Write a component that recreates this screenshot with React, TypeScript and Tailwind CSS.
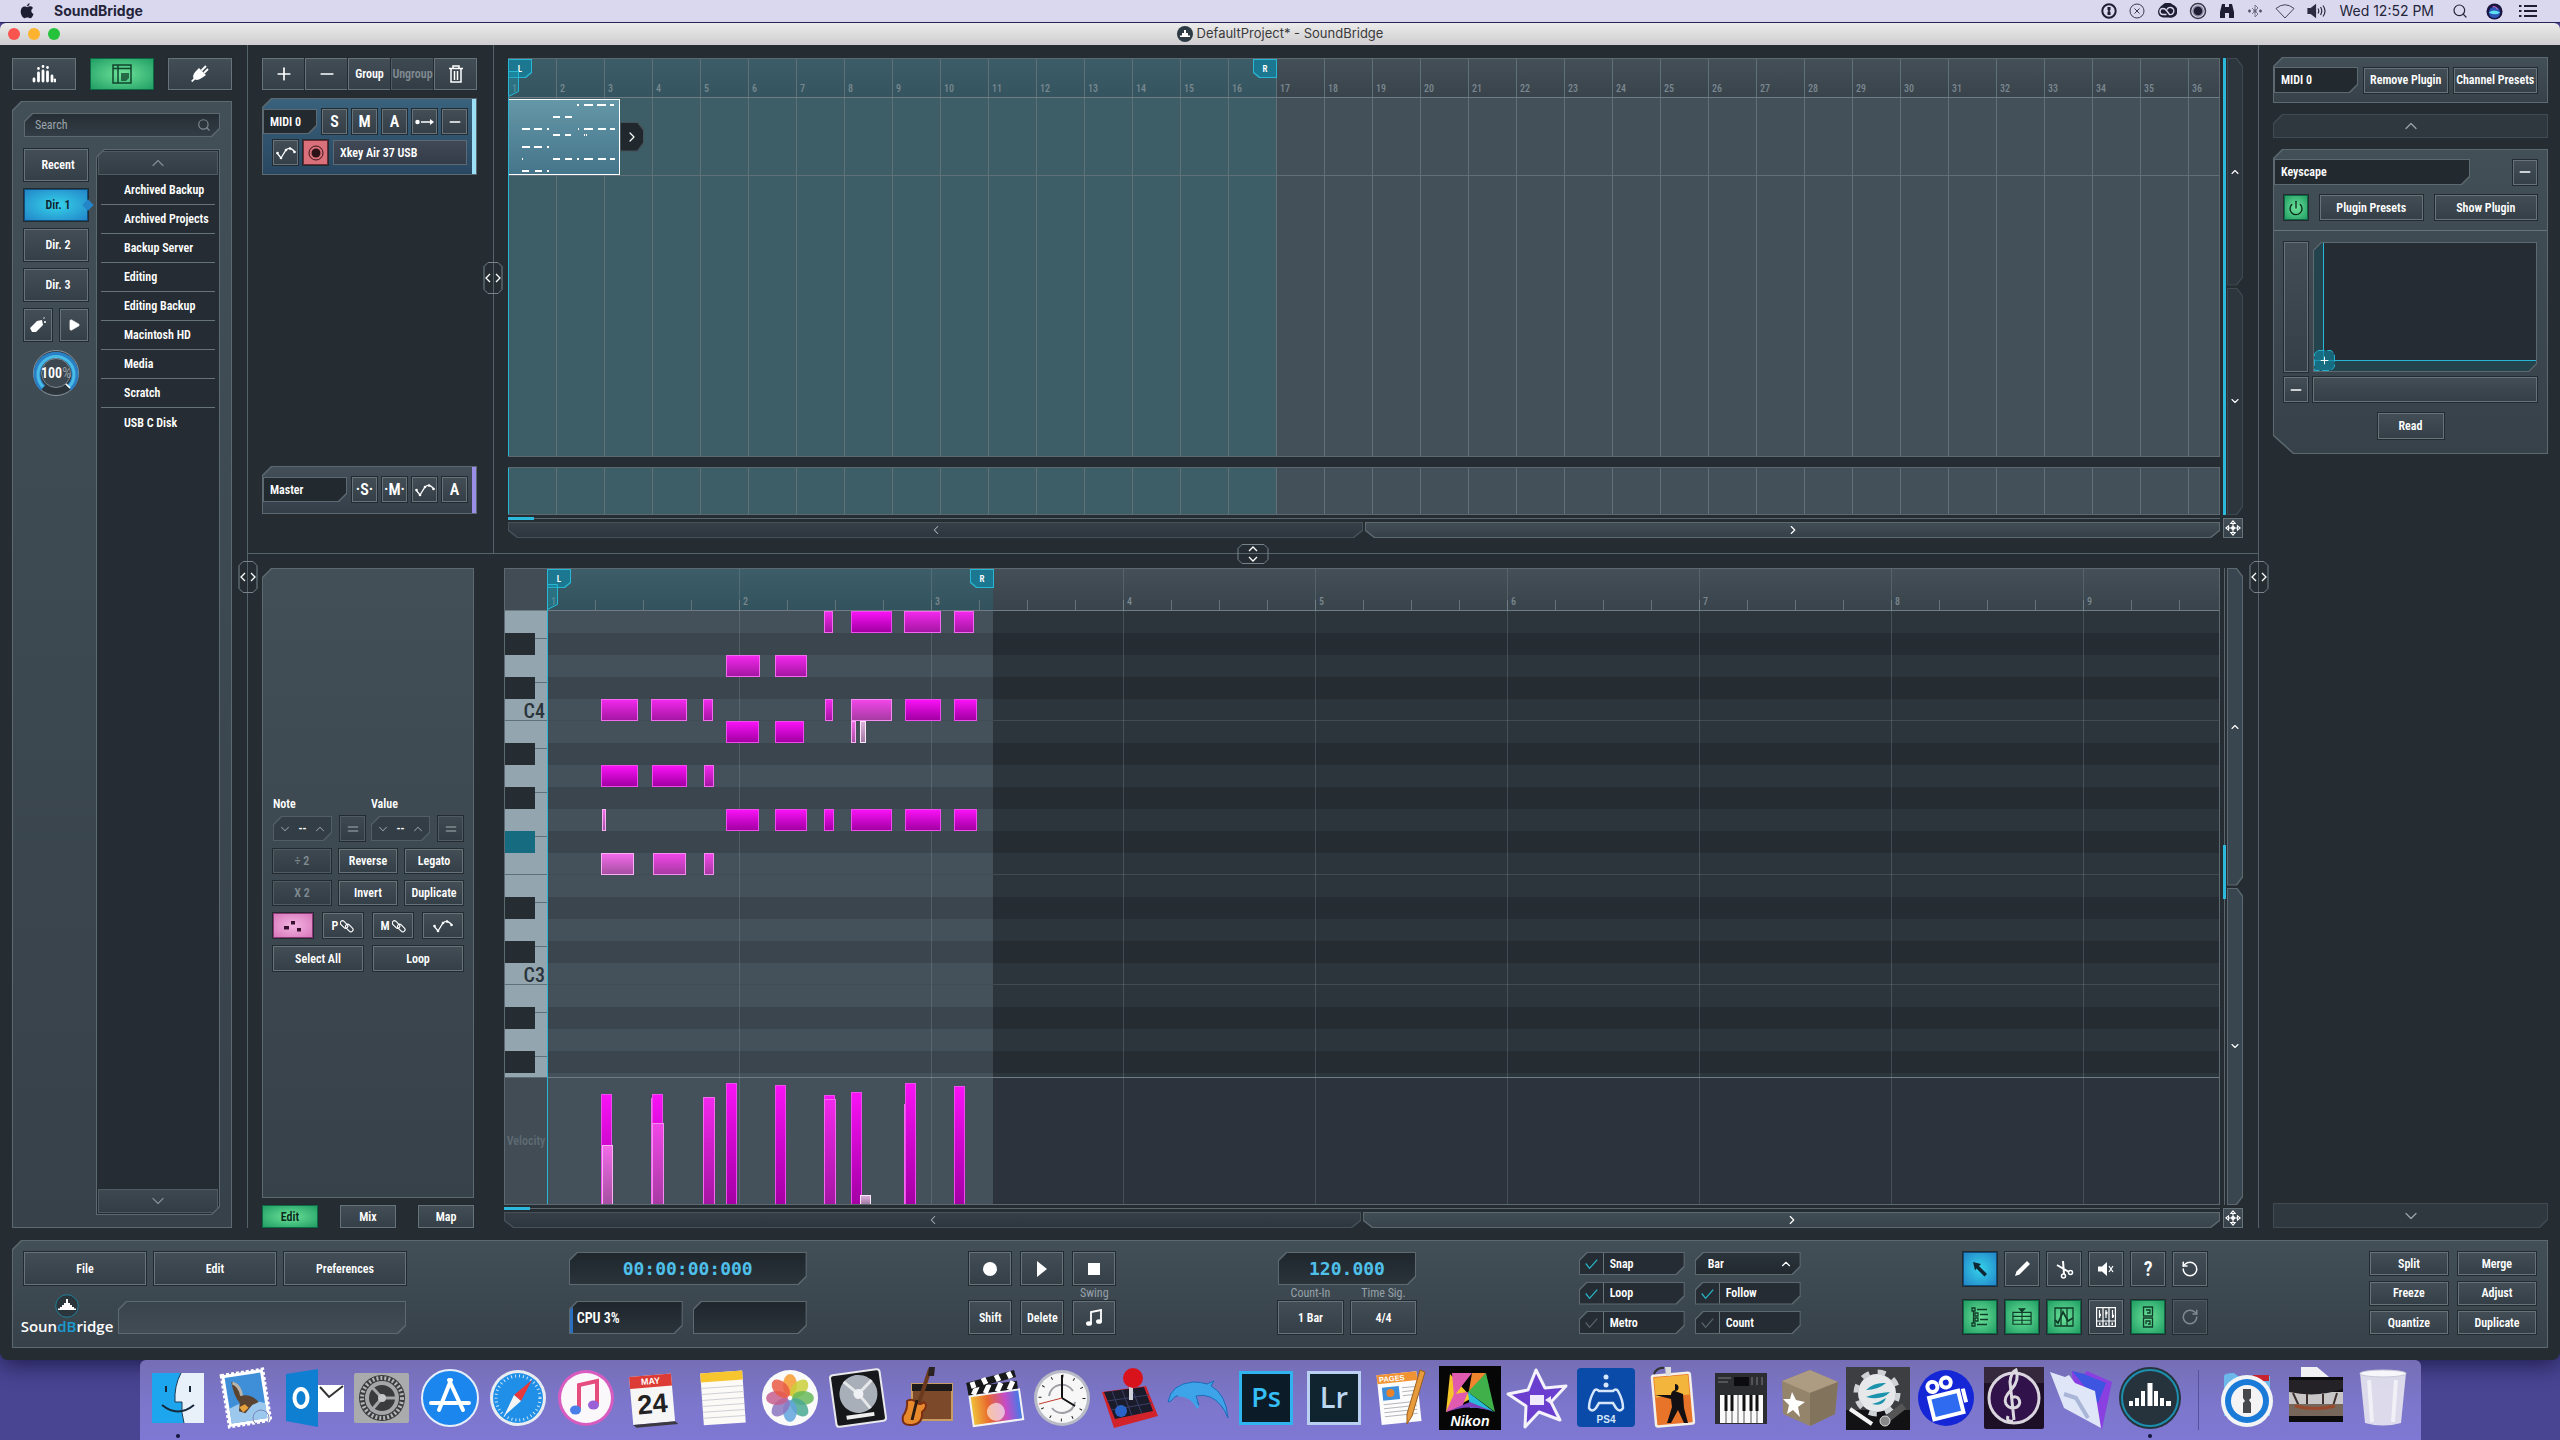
import { ReactNode } from "react";
import clsx from "clsx";
import {
  ChevronDown, ChevronLeft, ChevronRight, ChevronUp, Equal, Minus,
  Play, Plus, Power, RotateCcw, RotateCw, Search, Trash2,
} from "lucide-react";

const tones = {
  plain: "border-[#66737b] bg-linear-to-b from-[#424d56] to-[#343f48] text-white",
  dim: "border-[#4f5b63] bg-linear-to-b from-[#3d4850] to-[#333d46] text-[#808a91]",
  green: "border-[#0d6a45] bg-[radial-gradient(#6ee39a,#1f9d63)] text-[#0c2a1c]",
  blue: "border-[#0d4f7e] bg-[radial-gradient(#35d3ea,#2385c8)] text-[#10222e]",
  pink: "border-[#8a3a78] bg-[radial-gradient(#f3b4e2,#d877ba)] text-[#3a1030]",
  red: "border-[#6b2c33] bg-[#d9707a] text-[#2a1216]",
};

type BtnProps = { children?: ReactNode; tone?: keyof typeof tones; className?: string; label?: string };

function Btn({ children, tone = "plain", className, label }: BtnProps) {
  return (
    <button
      aria-label={label}
      className={clsx(
        "flex shrink-0 items-center justify-center border whitespace-nowrap shadow-[0_0_0_1px_#232b31]",
        tones[tone],
        className,
      )}
    >
      {children}
    </button>
  );
}

/* Panels with bevelled corners: the outer box is the border, the inner one the fill. */
const cuts = {
  tl: "[clip-path:polygon(9px_0,100%_0,100%_100%,0_100%,0_9px)]",
  tlbr: "[clip-path:polygon(8px_0,100%_0,100%_calc(100%_-_8px),calc(100%_-_8px)_100%,0_100%,0_8px)]",
  br: "[clip-path:polygon(0_0,100%_0,100%_calc(100%_-_8px),calc(100%_-_8px)_100%,0_100%)]",
  flagL: "[clip-path:polygon(0_0,100%_0,100%_calc(100%_-_5px),calc(100%_-_6px)_100%,0_100%)]",
  flagR: "[clip-path:polygon(0_0,100%_0,100%_100%,6px_100%,0_calc(100%_-_5px))]",
  right: "[clip-path:polygon(0_0,calc(100%_-_6px)_0,100%_8px,100%_calc(100%_-_8px),calc(100%_-_6px)_100%,0_100%)]",
  bottom: "[clip-path:polygon(0_0,100%_0,100%_calc(100%_-_7px),calc(100%_-_9px)_100%,9px_100%,0_calc(100%_-_7px))]",
  card: "[clip-path:polygon(9px_0,100%_0,100%_100%,20px_100%,0_calc(100%_-_18px),0_9px)]",
};

type CutProps = { children?: ReactNode; cut: keyof typeof cuts; className?: string; inner?: string; edge?: string };

function Cut({ children, cut, className, inner, edge = "bg-[#5d6971]" }: CutProps) {
  return (
    <div className={clsx("flex p-px", cuts[cut], edge, className)}>
      <div className={clsx("flex min-w-0 flex-1", cuts[cut], inner)}>{children}</div>
    </div>
  );
}

const panel = "bg-linear-to-b from-[#434f57] to-[#36414a]";
const well = "bg-[#252c33]";
const display = "items-center bg-linear-to-b from-[#1f272d] to-[#2b333b]";
const digits = "font-['DejaVu_Sans_Mono',monospace] text-lg font-bold text-[#4fc0ea]";

function NameField({ value, label, className }: { value: string; label: string; className: string }) {
  return (
    <Cut cut="br" className={className} inner="bg-[#222a30]">
      <input aria-label={label} defaultValue={value} className="w-full min-w-0 bg-transparent px-1.5 text-white outline-none" />
    </Cut>
  );
}

function Curve() {
  return (
    <svg viewBox="0 0 20 14" className="h-3.5 w-5" fill="none" stroke="currentColor" strokeWidth="1.3">
      <path d="M1 7l4 5 5-8q4-4 9 2" />
      <g fill="currentColor" stroke="none">
        <circle cx="1.5" cy="7" r="1.3" /><circle cx="5" cy="12" r="1.3" /><circle cx="10" cy="4" r="1.3" /><circle cx="14" cy="2.5" r="1.3" /><circle cx="18.5" cy="6" r="1.3" />
      </g>
    </svg>
  );
}

function Handle({ className, vertical }: { className: string; vertical?: boolean }) {
  return (
    <button aria-label="Resize" className={clsx("absolute z-20 flex items-center justify-center", className)}>
      {vertical ? (
        <svg viewBox="0 0 32 20" className="h-5 w-8" fill="none">
          <path d="M5 .5h22l4 4v11l-4 4H5l-4-4v-11z" stroke="#77828a" />
          <path d="M12 7l4-4 4 4M12 13l4 4 4-4" stroke="#fff" strokeWidth="1.3" />
        </svg>
      ) : (
        <svg viewBox="0 0 20 32" className="h-8 w-5" fill="none">
          <path d="M5 .5h10l4 4v23l-4 4H5l-4-4v-23z" stroke="#77828a" />
          <path d="M7 12l-4 4 4 4M13 12l4 4-4 4" stroke="#fff" strokeWidth="1.3" />
        </svg>
      )}
    </button>
  );
}

function MoveBtn() {
  return (
    <Btn label="Fit view" className="size-5">
      <svg viewBox="0 0 18 18" className="size-4" fill="none" stroke="#fff" strokeWidth="1.2">
        <circle cx="9" cy="9" r="1.6" fill="#fff" />
        <path d="M9 1l2.5 3h-5zM9 17l2.5-3h-5zM1 9l3-2.5v5zM17 9l-3-2.5v5zM9 4v10M4 9h10" />
      </svg>
    </Btn>
  );
}

/* ---------- menu bar and title bar ---------- */

function MenuBar() {
  return (
    <div className="flex h-[23px] shrink-0 items-center border-b border-[#26265a] bg-[#d9d8ef] pr-[23px] pl-5 font-[Inter,sans-serif] text-sm font-normal text-[#24243a]">
      <svg viewBox="0 0 16 18" className="h-4 w-3.5" fill="#1d1d33">
        <path d="M11 0c.1 1.500-1.300 3.600-3.200 3.700C7.600 2 9.400.2 11 0zM8.200 4.600c.9 0 1.800-.9 3.400-.9 1.300 0 2.500.7 3.300 1.800-2.900 1.700-2.400 5.600.6 6.800-.8 2.300-2.300 4.900-4 4.900-1.200 0-1.600-.8-3.100-.8s-2 .8-3.100.8C3.300 17.200.8 13.400.8 9.600c0-3.600 2.200-5.800 4.500-5.800 1.300 0 2.200.8 2.900.8z" />
      </svg>
      <span className="ml-5 font-bold">SoundBridge</span>
      <div className="ml-auto flex items-center gap-3">
        <svg viewBox="0 0 16 16" className="size-4"><circle cx="8" cy="8" r="6.7" fill="none" stroke="#1d1d33" strokeWidth="2" /><path d="M6.500 4h3v3l-1 1 1 1v3h-3V9l1-1-1-1z" fill="#1d1d33" /></svg>
        <svg viewBox="0 0 16 16" className="size-4" fill="none" stroke="#3a3a52"><circle cx="8" cy="8" r="7" /><path d="M5.500 5.500l5 5m0-5l-5 5" /></svg>
        <svg viewBox="0 0 20 16" className="h-4 w-5"><path d="M6 1.500a6.500 6.500 0 0 1 9.500 0A6.500 6.500 0 0 1 12 14.500H6A6 6 0 0 1 1 9q0-4 5-7.500z" fill="#1d1d33" /><path d="M9.500 11.500H6a3 3 0 0 1 0-6q2 0 3.500 2l3 4q3 .5 4-2a3.500 3.500 0 0 0-6.500-3" fill="none" stroke="#d9d8ef" strokeWidth="1.4" /></svg>
        <svg viewBox="0 0 18 18" className="size-[18px]"><circle cx="9" cy="9" r="7.5" fill="none" stroke="#3a3a4a" strokeWidth="1.5" /><circle cx="9" cy="9" r="5" fill="#1d1d33" stroke="#8886a0" strokeWidth="1.5" /></svg>
        <svg viewBox="0 0 16 16" className="size-4" fill="#1d1d33"><path d="M3 1h3v3h4V1h3l2 8v6h-5v-5H6v5H1V9z" /></svg>
        <svg viewBox="0 0 16 16" className="size-4" fill="none" stroke="#77778c"><path d="M5 5l6 6-3 3V2l3 3-6 6" /><circle cx="2.5" cy="8" r="1.2" fill="#3a3a52" /><circle cx="8" cy="8" r="1.2" fill="#3a3a52" /><circle cx="13.5" cy="8" r="1.2" fill="#3a3a52" /></svg>
        <svg viewBox="0 0 20 16" className="h-4 w-5" fill="none" stroke="#45455c"><path d="M1 5.500Q10-2 19 5.500L10 15z" /></svg>
        <svg viewBox="0 0 20 16" className="h-4 w-5" fill="none" stroke="#2b2b42" strokeWidth="1.2"><path d="M1 5.500h3L8.500 2v12L4 10.500H1z" fill="#2b2b42" /><path d="M11 5.500q1.500 2.500 0 5M13.500 4q2.500 4 0 8M16 2.500q4 5.500 0 11" /></svg>
        <span>Wed 12:52 PM</span>
        <Search className="ml-1.5 size-4" strokeWidth={1.8} />
        <svg viewBox="0 0 18 18" className="ml-1.5 size-[17px]">
          <circle cx="9" cy="9" r="8.5" fill="#1a1440" /><circle cx="9" cy="10" r="6" fill="#2c56b8" /><path d="M3 10q5-4 12 0-5 4-12 0z" fill="#5ee0f0" /><path d="M7 4q4-1 5 3" stroke="#f06ac0" fill="none" />
        </svg>
        <svg viewBox="0 0 18 14" className="ml-1 h-3.5 w-[18px]" stroke="#1d1d33" strokeWidth="2"><path d="M0 2h2.500M5 2h13M0 7h2.500M5 7h13M0 12h2.500M5 12h13" /></svg>
      </div>
    </div>
  );
}

function TitleBar() {
  return (
    <div className="relative flex h-[22px] shrink-0 items-center justify-center gap-1 rounded-t-md bg-linear-to-b from-[#ececec] to-[#cfcdcf] font-[Inter,sans-serif] text-[13px] font-normal text-[#3a3a3a]">
      <div className="absolute left-2 flex gap-2">
        <i className="size-3 rounded-full bg-[#f9544d]" />
        <i className="size-3 rounded-full bg-[#fdb32f]" />
        <i className="size-3 rounded-full bg-[#27c23c]" />
      </div>
      <svg viewBox="0 0 16 16" className="size-4"><circle cx="8" cy="8" r="8" fill="#2c3a44" /><path d="M3 11V9.500h2V7h2V4h2v3h2v2.500h2V11z" fill="#fff" /></svg>
      <span>DefaultProject* - SoundBridge</span>
    </div>
  );
}

/* ---------- browser ---------- */

const folders = [
  "Archived Backup", "Archived Projects", "Backup Server", "Editing",
  "Editing Backup", "Macintosh HD", "Media", "Scratch", "USB C Disk",
];

function Browser() {
  return (
    <aside className="flex w-[248px] shrink-0 flex-col border-r border-[#56626a] pt-[13px] pr-[15px] pl-3">
      <div className="flex justify-between">
        <Btn className="h-8 w-16" label="Mixer">
          <svg viewBox="0 0 24 20" className="h-5 w-6" stroke="#fff" strokeWidth="2.8" strokeLinecap="round"><path d="M2 15v2M6.500 9v8M11 7v10M15.500 8v9M20 12v5M23 16v1" /><path d="M6.500 4.500v.1M11 2.500v.1M15.500 3.500v.1" /></svg>
        </Btn>
        <Btn tone="green" className="h-8 w-16" label="Files">
          <svg viewBox="0 0 20 20" className="size-5" fill="none" stroke="#12452e" strokeWidth="1.5"><path d="M1 1h18v18H1zM1 4.500h18M6 1v18" /><path d="M9 9h8v5l-3 3H9z" fill="#12452e" stroke="none" opacity=".75" /></svg>
        </Btn>
        <Btn className="h-8 w-16" label="Plugins">
          <svg viewBox="0 0 20 20" className="size-5"><path d="M9 4l7 7-3.500 2.500Q8 17 5 15.500L2.500 18 1 17l2.500-2.500Q2 11 6 7z" fill="#fff" /><path d="M11.500 6.500L16 2M14 9l4-4" stroke="#fff" strokeWidth="1.8" /></svg>
        </Btn>
      </div>
      <Cut cut="tl" className="mt-[11px] flex-1" inner={clsx("flex-col gap-3 px-[11px] pt-[11px] pb-3", panel)}>
        <Cut cut="tlbr" className="h-6" inner="items-center bg-linear-to-b from-[#262e35] to-[#333d45] pr-2 pl-2.5">
          <input aria-label="Search" placeholder="Search" className="w-full min-w-0 bg-transparent font-normal outline-none placeholder:text-[#9aa3a9]" />
          <Search className="size-3.5 shrink-0 text-[#7d8890]" />
        </Cut>
        <div className="flex flex-1 gap-2">
          <div className="flex w-16 flex-col gap-2">
            <Btn className="h-8 pl-1">Recent</Btn>
            <div className="relative">
              <Btn tone="blue" className="h-8 w-16 pl-1">Dir. 1</Btn>
              <i className="absolute top-3 -right-1 size-2 rotate-45 bg-[#2385c8]" />
            </div>
            <Btn className="h-8 pl-1">Dir. 2</Btn>
            <Btn className="h-8 pl-1">Dir. 3</Btn>
            <div className="flex gap-2">
              <Btn className="h-8 w-7" label="Tag">
                <svg viewBox="0 0 18 18" className="size-[18px]" fill="#fff"><path d="M1 12l7-7 5-1 1 5-7 7H3zM14 3l1-2 1 1z" /><circle cx="16" cy="6" r="1" /></svg>
              </Btn>
              <Btn className="h-8 w-7" label="Preview"><Play className="size-3.5" fill="#fff" strokeWidth={1} /></Btn>
            </div>
            <div className="relative flex size-12 items-center justify-center self-center">
              <svg viewBox="0 0 48 48" className="absolute inset-0 size-12" fill="none">
                <circle cx="24" cy="24" r="22.5" fill="#2b343b" stroke="#8b979e" />
                <path d="M11 39A19 19 0 1 1 37 39" stroke="#2b7fc4" strokeWidth="7" />
                <path d="M11 38A18 18 0 1 1 37 38" stroke="#48bbe6" strokeWidth="3" />
                <path d="M33 34l5 5" stroke="#fff" strokeWidth="1.5" />
                <circle cx="24" cy="24" r="14.5" fill="#3c4750" stroke="#7a868d" />
              </svg>
              <span className="relative text-sm">100<span className="font-normal text-[#9aa3a9]">%</span></span>
            </div>
          </div>
          <Cut cut="tlbr" className="min-w-0 flex-1" inner={clsx("flex-col", well)}>
            <div className="p-px"><Btn tone="dim" className="h-6 w-full" label="Scroll up"><ChevronUp className="size-5" strokeWidth={1.5} /></Btn></div>
            <ul className="mx-1 flex-1 divide-y divide-[#66727a]">
              {folders.map((name) => (
                <li key={name} className="flex h-[29px] items-center pl-[23px] whitespace-nowrap">{name}</li>
              ))}
            </ul>
            <div className="p-px"><Btn tone="dim" className="h-6 w-full" label="Scroll down"><ChevronDown className="size-5" strokeWidth={1.5} /></Btn></div>
          </Cut>
        </div>
      </Cut>
    </aside>
  );
}

/* ---------- track list ---------- */

function TrackList() {
  return (
    <div className="flex w-[246px] shrink-0 flex-col border-r border-[#56626a] pt-[13px] pr-4 pb-[39px] pl-3.5">
      <div className="flex h-8">
        <Btn className="flex-1" label="Add track"><Plus className="size-5" strokeWidth={2} /></Btn>
        <Btn className="flex-1" label="Remove track"><Minus className="size-5" strokeWidth={2} /></Btn>
        <Btn className="w-[43px]">Group</Btn>
        <Btn tone="dim" className="w-[43px]">Ungroup</Btn>
        <Btn className="flex-1" label="Delete">
          <svg viewBox="0 0 14 18" className="h-[18px] w-3.5" fill="none" stroke="#fff" strokeWidth="1.5"><path d="M0 3.500h14M4 3V1h6v2M2 4v13h10V4M5.500 6v9M8.500 6v9" /></svg>
        </Btn>
      </div>
      <Cut cut="tl" className="mt-2 h-[77px]" inner="bg-linear-to-b from-[#3a627d] to-[#294760]">
        <div className="flex flex-1 flex-col gap-1.5 pt-2.5">
          <div className="flex h-[25px] gap-[5px] text-base">
            <NameField label="Track name" value="MIDI 0" className="w-[54px] text-xs" />
            <Btn className="w-[25px]">S</Btn>
            <Btn className="w-[25px]">M</Btn>
            <Btn className="w-[25px]">A</Btn>
            <Btn className="w-[25px]" label="Route">
              <svg viewBox="0 0 20 10" className="h-2.5 w-5" stroke="#fff" strokeWidth="1.5" fill="#fff"><circle cx="2.5" cy="5" r="1.5" /><path d="M6 5h10" /><path d="M15 2l4 3-4 3z" stroke="none" /></svg>
            </Btn>
            <Btn className="w-[25px]" label="Collapse"><Minus className="size-4" strokeWidth={2.5} /></Btn>
          </div>
          <div className="flex h-[25px] gap-[5px] pl-2.5">
            <Btn className="w-[25px]" label="Automation"><Curve /></Btn>
            <Btn tone="red" className="w-[25px]" label="Record arm">
              <svg viewBox="0 0 16 16" className="size-4"><circle cx="8" cy="8" r="7" fill="none" stroke="#3a1418" /><circle cx="8" cy="8" r="4.5" fill="#2a1216" /></svg>
            </Btn>
            <button className="w-[134px] border border-[#5c6a75] bg-linear-to-b from-[#414856] to-[#343c4a] pl-1.5 text-left">Xkey Air 37 USB</button>
          </div>
        </div>
        <i className="w-1 bg-[#9be0f6]" />
      </Cut>
      <Cut cut="tl" className="mt-auto h-12" inner="bg-linear-to-b from-[#434e58] to-[#353f49]">
        <div className="flex h-[35px] flex-1 gap-[5px] pt-2.5 text-base">
          <NameField label="Master name" value="Master" className="w-[84px] text-xs" />
          <Btn className="w-[25px]">·S·</Btn>
          <Btn className="w-[25px]">·M·</Btn>
          <Btn className="w-[25px]" label="Automation"><Curve /></Btn>
          <Btn className="w-[25px]">A</Btn>
        </div>
        <i className="w-1 bg-[#9a8ee8]" />
      </Cut>
    </div>
  );
}

/* ---------- notes: [row, start, end, softness], in roll pixels ---------- */

const notes = [
  [0, 277, 286, 1], [0, 304, 345, 0], [0, 357, 394, 1], [0, 407, 427, 1],
  [2, 179, 213, 1], [2, 228, 260, 1],
  [4, 54, 91, 1], [4, 104, 140, 1], [4, 156, 166, 1], [4, 278, 286, 1], [4, 304, 345, 2], [4, 358, 394, 0], [4, 407, 430, 0],
  [5, 179, 212, 0], [5, 228, 257, 0], [5, 304, 309, 3], [5, 313, 319, 4],
  [7, 54, 91, 0], [7, 105, 140, 0], [7, 157, 167, 1],
  [9, 55, 59, 3], [9, 179, 212, 0], [9, 228, 260, 0], [9, 277, 287, 0], [9, 304, 345, 0], [9, 358, 394, 0], [9, 407, 430, 0],
  [11, 54, 87, 3], [11, 106, 139, 2], [11, 157, 167, 2],
];

/* [start, width, height, softness] */
const velocities = [
  [54, 11, 110, 0], [55, 11, 59, 3], [104, 11, 106, 1], [105, 11, 110, 0], [105, 12, 81, 2],
  [156, 12, 107, 1], [179, 11, 121, 0], [228, 11, 119, 0], [277, 11, 109, 0], [277, 12, 105, 1],
  [304, 11, 112, 0], [313, 11, 9, 4], [357, 11, 100, 1], [358, 11, 121, 0], [407, 11, 118, 0],
];

const noteTones = [
  "border-[#ee4cec] bg-linear-to-b from-[#f912f6] to-[#a300a4]",
  "border-[#f26aee] bg-linear-to-b from-[#f228ec] to-[#a516a3]",
  "border-[#f58cf0] bg-linear-to-b from-[#f146e8] to-[#a83aa3]",
  "border-[#f9b0f4] bg-linear-to-b from-[#f36aea] to-[#a650a2]",
  "border-[#fbe6fa] bg-linear-to-b from-[#ddb0dc] to-[#a27ca4]",
];

function Flag({ children, side }: { children: ReactNode; side: "left" | "right" }) {
  return (
    <Cut
      cut={side === "left" ? "flagL" : "flagR"}
      edge="bg-[#27b6d4]"
      className="h-[19px] w-6 text-[9px]"
      inner="items-center justify-center bg-[#1c7890]"
    >
      {children}
    </Cut>
  );
}

function Playhead() {
  return (
    <svg viewBox="0 0 11 26" className="absolute bottom-0 left-0 h-[26px] w-[11px]" fill="#1c98b266" stroke="#27b6d4">
      <path d="M.5.5h10v20l-10 5z" />
    </svg>
  );
}

function HScroll({ bright }: { bright?: boolean }) {
  return (
    <div className="relative flex flex-1 items-end gap-0.5 border-t border-[#5a666e]">
      <i className="absolute -top-0.5 left-0 h-[3px] w-[26px] bg-[#2cb9dc]" />
      <Cut cut="bottom" edge="bg-[#46525a]" className="h-4 flex-1" inner="justify-center bg-linear-to-b from-[#363f48] to-[#2d363e]">
        <button aria-label="Scroll left"><ChevronLeft className="size-3.5 text-[#aab2b7]" strokeWidth={1.8} /></button>
      </Cut>
      <Cut cut="bottom" className="h-4 flex-1" inner={clsx("justify-center", bright ? "bg-linear-to-b from-[#414d55] to-[#38434b]" : "bg-linear-to-b from-[#424e56] to-[#353f48]")}>
        <button aria-label="Scroll right"><ChevronRight className="size-3.5 text-white" strokeWidth={2} /></button>
      </Cut>
    </div>
  );
}

function VScroll({ children, bright }: { children: ReactNode; bright?: boolean }) {
  const fill = bright ? "items-center justify-center bg-[#3a464f]" : "items-center justify-center bg-[#2d353d]";
  const edge = bright ? "bg-[#5d6971]" : "bg-[#3d4850]";
  return (
    <div className="flex w-5 gap-px">
      <div className="relative w-[3px]">{children}</div>
      <div className="flex w-4 flex-col gap-0.5">
        <Cut cut="right" edge={edge} className="flex-1" inner={fill}>
          <button aria-label="Scroll up"><ChevronUp className="size-3" strokeWidth={2.2} /></button>
        </Cut>
        <Cut cut="right" edge={edge} className="flex-1" inner={fill}>
          <button aria-label="Scroll down"><ChevronDown className="size-3" strokeWidth={2.2} /></button>
        </Cut>
      </div>
    </div>
  );
}

const barLines = "absolute inset-0 bg-[repeating-linear-gradient(90deg,#607079_0_1px,transparent_1px_48px)]";

function Arrangement() {
  return (
    <div className="flex min-w-0 flex-1 flex-col gap-[3px] pt-[13px] pr-[15px] pb-[15px] pl-3.5">
      <div className="flex flex-1 gap-[3px]">
        <div className="flex min-w-0 flex-1 flex-col">
          <div className="relative h-10 overflow-hidden border-t border-r border-b border-[#5c6971] border-b-[#6f7c84] bg-linear-to-b from-[#444f58] to-[#39434c]">
            <div className="absolute inset-y-0 left-0 w-[768px] bg-linear-to-b from-[#3c5d67] to-[#345560]" />
            <div className={barLines} />
            <div className="relative flex h-full items-end text-[10px] font-medium text-[#7a888f]">
              {Array.from({ length: 36 }, (_, i) => (
                <span key={i} className="w-12 shrink-0 pb-0.5 pl-1">{i + 1}</span>
              ))}
            </div>
            <div className="absolute top-0 left-0"><Flag side="left">L</Flag></div>
            <div className="absolute top-0 left-[745px]"><Flag side="right">R</Flag></div>
            <Playhead />
          </div>
          <div className="relative mb-2.5 flex-1 border-r border-b border-[#5c6971] bg-[#435059]">
            <div className="absolute inset-y-0 left-0 w-[768px] border-l border-[#27b6d4] bg-[#3d5d67]" />
            <div className={barLines} />
            <div className="relative flex h-[78px] items-center border-b border-[#607079]">
              <div className="relative h-[76px] w-28 overflow-hidden border border-white bg-linear-to-b from-[#6497a8] to-[#45758a]">
                {notes.map(([row, start, end], i) => (
                  <i key={i} className="absolute h-0.5 bg-white" style={{ left: start / 4 - 1, top: row * 6 + 4, width: Math.max(1, (end - start) / 4 - 1) }} />
                ))}
              </div>
              <Cut cut="right" edge="bg-[#46525a]" className="h-[30px] w-6" inner="items-center justify-center bg-[#20282d]">
                <button aria-label="Expand clip"><ChevronRight className="size-4" strokeWidth={1.8} /></button>
              </Cut>
            </div>
            <i className="absolute inset-y-0 left-0 w-px bg-[#27b6d4]" />
          </div>
          <div className="relative h-12 border-t border-r border-b border-[#5c6971] bg-[#435059]">
            <div className="absolute inset-y-0 left-0 w-[768px] bg-[#3d5d67]" />
            <div className={barLines} />
            <i className="absolute inset-y-0 left-0 w-px bg-[#27b6d4]" />
          </div>
        </div>
        <VScroll><i className="absolute inset-0 bg-[#2cb9dc]" /></VScroll>
      </div>
      <div className="flex h-5 gap-[3px]"><HScroll /><MoveBtn /></div>
    </div>
  );
}

/* ---------- note editor ---------- */

function Stepper({ label }: { label: string }) {
  return (
    <div className="flex w-[92px] flex-col gap-1">
      <span>{label}</span>
      <div className="flex h-[25px] justify-between">
        <Cut cut="tlbr" edge="bg-[#525e66]" className="w-[59px]" inner="items-center justify-between bg-[#333d45] px-1">
          <button aria-label={`${label} down`}><ChevronDown className="size-3.5 text-[#8d979e]" strokeWidth={1.8} /></button>
          <span>--</span>
          <button aria-label={`${label} up`}><ChevronUp className="size-3.5 text-[#8d979e]" strokeWidth={1.8} /></button>
        </Cut>
        <Btn tone="dim" className="w-[25px]" label={`Set ${label}`}><Equal className="size-4" strokeWidth={2} /></Btn>
      </div>
    </div>
  );
}

function LinkIcon() {
  return (
    <svg viewBox="0 0 16 16" className="size-3.5" fill="none" stroke="#fff" strokeWidth="1.3">
      <rect x="0" y="4" width="10" height="5" rx="2.5" transform="rotate(45 5 6)" />
      <rect x="6" y="8" width="10" height="5" rx="2.5" transform="rotate(45 11 10)" />
    </svg>
  );
}

function NoteTools() {
  return (
    <div className="flex w-[226px] shrink-0 flex-col gap-[7px] pt-3.5 pl-3.5">
      <Cut cut="tl" className="flex-1" inner={clsx("flex-col px-2.5", panel)}>
        <div className="mt-[227px] flex flex-col gap-2">
          <div className="flex justify-between"><Stepper label="Note" /><Stepper label="Value" /></div>
          <div className="grid grid-cols-3 gap-2">
            <Btn tone="dim" className="h-6">÷ 2</Btn>
            <Btn className="h-6">Reverse</Btn>
            <Btn className="h-6">Legato</Btn>
            <Btn tone="dim" className="h-6">X 2</Btn>
            <Btn className="h-6">Invert</Btn>
            <Btn className="h-6">Duplicate</Btn>
          </div>
          <div className="grid grid-cols-4 gap-2.5">
            <Btn tone="pink" className="h-[25px]" label="Notes">
              <svg viewBox="0 0 18 12" className="h-3 w-[18px]" fill="#3a1030"><path d="M0 6h5v3.500H0zM7 1h4v3.500H7zM13 8h4v3.500h-4z" /></svg>
            </Btn>
            <Btn className="h-[25px] gap-0.5">P<LinkIcon /></Btn>
            <Btn className="h-[25px] gap-0.5">M<LinkIcon /></Btn>
            <Btn className="h-[25px]" label="Curve"><Curve /></Btn>
          </div>
          <div className="grid grid-cols-2 gap-2.5">
            <Btn className="h-[25px]">Select All</Btn>
            <Btn className="h-[25px]">Loop</Btn>
          </div>
        </div>
      </Cut>
      <div className="flex justify-between">
        <Btn tone="green" className="h-[23px] w-14">Edit</Btn>
        <Btn className="h-[23px] w-14">Mix</Btn>
        <Btn className="h-[23px] w-14">Map</Btn>
      </div>
    </div>
  );
}

// E4 at the top, down to G2
const keys = "wbwbwwbwbwbwwbwbwwbwbw".split("");
const octaves: Record<number, string> = { 4: "C4", 16: "C3" };

function PianoRoll() {
  return (
    <div className="flex min-w-0 flex-1 flex-col gap-[3px] pt-3.5 pr-[15px] pl-[30px]">
      <div className="flex min-h-0 flex-1 gap-[3px]">
        <div className="flex min-w-0 flex-1 border border-[#5c6971]">
          <div className="flex w-[42px] shrink-0 flex-col">
            <div className="h-[42px] shrink-0 border-b border-[#6f7c84] bg-[#414c55]" />
            <div className="flex-1 overflow-hidden bg-[#93a6af]">
              {keys.map((key, i) => (
                <div key={i} className={clsx("flex h-[22px] justify-between", (i === 4 || i === 11 || i === 16) && "border-b border-[#5f7079]")}>
                  {key === "b" ? (
                    <>
                      <i className={clsx("w-[30px]", i === 10 ? "bg-[#176b81]" : "bg-[#252c32]")} />
                      <i className="h-1.5 w-3 border-b border-[#5f7079]" />
                    </>
                  ) : (
                    <span className="w-full pr-0.5 text-right text-xl leading-6 font-medium text-[#2b343b]">{octaves[i]}</span>
                  )}
                </div>
              ))}
            </div>
            <div className="flex h-[127px] shrink-0 items-center justify-center border-t border-[#5f6b73] bg-[#414c55] text-[#5e6a72]">Velocity</div>
          </div>
          <div className="relative flex min-w-0 flex-1 flex-col overflow-hidden">
            <div className="relative h-[42px] shrink-0 border-b border-[#6f7c84] bg-linear-to-b from-[#444f58] to-[#38434b]">
              <div className="absolute inset-y-0 left-0 w-[446px] bg-linear-to-b from-[#3d5e68] to-[#32535e]" />
              <div className="absolute inset-x-0 bottom-0 h-2.5 bg-[repeating-linear-gradient(90deg,#64727a_0_1px,transparent_1px_48px)]" />
              <div className="relative flex h-full items-end text-[10px] font-medium text-[#7a888f]">
                {Array.from({ length: 9 }, (_, i) => (
                  <span key={i} className="w-48 shrink-0 pb-0.5 pl-1">{i + 1}</span>
                ))}
              </div>
              <div className="absolute top-0 left-0"><Flag side="left">L</Flag></div>
              <div className="absolute top-0 left-[423px]"><Flag side="right">R</Flag></div>
              <Playhead />
            </div>
            <div className="relative min-h-0 flex-1 overflow-hidden">
              {keys.map((key, i) => (
                <div key={i} className={clsx("flex h-[22px]", (i === 4 || i === 11 || i === 16) && "border-b border-[#8fa0a844]")}>
                  <i className={clsx("w-[446px]", key === "b" ? "bg-[#3b454e]" : "bg-[#44515a]")} />
                  <i className={clsx("flex-1", key === "b" ? "bg-[#252c32]" : "bg-[#2c343c]")} />
                </div>
              ))}
              {notes.map(([row, start, end, soft], i) => (
                <i key={i} className={clsx("absolute z-10 h-[22px] border", noteTones[soft])} style={{ left: start, top: row * 22, width: end - start }} />
              ))}
            </div>
            <div className="relative flex h-[127px] shrink-0 border-t border-[#6f7c84] bg-[#2c333c]">
              <i className="w-[446px] bg-[#44515a]" />
              {velocities.map(([start, width, height, soft], i) => (
                <i key={i} className={clsx("absolute bottom-0 z-10 border border-b-0", noteTones[soft])} style={{ left: start, width, height }} />
              ))}
            </div>
            <div className="pointer-events-none absolute inset-0 bg-[repeating-linear-gradient(90deg,#8fa0a844_0_1px,transparent_1px_192px)]" />
            <i className="absolute inset-y-0 left-0 w-px bg-[#27b6d4]" />
          </div>
        </div>
        <VScroll bright>
          <i className="absolute inset-y-0 left-px w-px bg-[#5a666e]" />
          <i className="absolute top-[43.5%] left-0 h-[54px] w-[3px] bg-[#2cb9dc]" />
        </VScroll>
      </div>
      <div className="flex h-5 gap-[3px]"><HScroll bright /><MoveBtn /></div>
    </div>
  );
}

/* ---------- channel strip ---------- */

function Channel() {
  return (
    <aside className="relative flex w-[302px] shrink-0 flex-col border-l border-[#56626a] pt-3 pr-3 pl-3.5">
      <Handle className="top-[516px] -left-2.5" />
      <Cut cut="tl" className="h-[46px]" inner={clsx("items-center gap-1.5 pr-2.5", panel)}>
        <NameField label="Channel name" value="MIDI 0" className="h-[26px] w-[84px]" />
        <Btn className="h-[25px] flex-1">Remove Plugin</Btn>
        <Btn className="h-[25px] flex-1">Channel Presets</Btn>
      </Cut>
      <Cut cut="tl" edge="bg-[#3f4a52]" className="mt-[11px] h-6" inner="items-center justify-center bg-[#2f383f]">
        <button aria-label="Previous"><ChevronUp className="size-5 text-[#9aa3a9]" strokeWidth={1.5} /></button>
      </Cut>
      <Cut cut="card" className="mt-[11px]" inner={clsx("flex-col", panel)}>
        <div className="flex items-center justify-between pt-[9px] pr-2.5">
          <NameField label="Plugin name" value="Keyscape" className="h-[26px] w-[196px]" />
          <Btn className="h-[25px] w-6" label="Collapse"><Minus className="size-4" strokeWidth={2.5} /></Btn>
        </div>
        <div className="flex gap-3 border-b border-[#66737b] px-2.5 pt-2.5 pb-2.5">
          <Btn tone="green" className="h-[25px] w-6" label="Power"><Power className="size-4" /></Btn>
          <Btn className="h-[25px] flex-1">Plugin Presets</Btn>
          <Btn className="h-[25px] flex-1">Show Plugin</Btn>
        </div>
        <div className="flex gap-[5px] px-2.5 pt-[11px]">
          <Btn className="h-[130px] w-6" label="Vertical parameter" />
          <Cut cut="tlbr" className="h-[130px] flex-1" inner={clsx("relative", well)}>
            <i className="w-2.5 border-r border-[#27b6d4] bg-[#23434d]" />
            <i className="absolute inset-x-0 bottom-0 h-[11px] border-t border-[#27b6d4] bg-[#23434d]" />
            <svg viewBox="0 0 22 22" className="absolute bottom-0 left-0 size-[21px]" fill="#12839caa" stroke="#27b6d4">
              <path d="M4 .5h14l3.500 4v13l-3.500 4H.5V4z" strokeDasharray="7 3" />
              <path d="M11 7v8M7 11h8" stroke="#fff" />
            </svg>
          </Cut>
        </div>
        <div className="flex gap-[5px] px-2.5 pt-[5px]">
          <Btn className="h-[25px] w-6" label="Clear"><Minus className="size-4" strokeWidth={2.5} /></Btn>
          <Btn className="h-[25px] flex-1" label="Horizontal parameter" />
        </div>
        <Btn className="mt-[11px] mb-3.5 h-[26px] w-[66px] self-center">Read</Btn>
      </Cut>
      <Cut cut="br" edge="bg-[#3f4a52]" className="mt-auto h-[25px]" inner="items-center justify-center bg-[#2f383f]">
        <button aria-label="Next"><ChevronDown className="size-5 text-[#9aa3a9]" strokeWidth={1.5} /></button>
      </Cut>
    </aside>
  );
}

/* ---------- transport ---------- */

function Toggle({ label, on }: { label: string; on?: boolean }) {
  return (
    <Cut cut="tlbr" className="h-[23px] w-[106px]" inner={well}>
      <label className="flex flex-1 items-center">
        <input type="checkbox" defaultChecked={on} className="peer sr-only" />
        <svg viewBox="0 0 24 20" className="h-full w-6 border-r border-[#66737b] stroke-[#58646b] peer-checked:stroke-[#27b6c8]" fill="none" strokeWidth="1.3">
          <path d="M6 10l4 5 8-9" />
        </svg>
        <span className="pl-1.5">{label}</span>
      </label>
    </Cut>
  );
}

const gi = "size-5";

function Transport() {
  return (
    <Cut cut="tl" className="mx-3 mt-3 mb-3 shrink-0" inner={clsx("justify-between px-[11px] pt-[11px] pb-[13px]", panel)}>
      <div className="flex h-[82px] flex-col justify-between">
        <div className="flex gap-2">
          <Btn className="h-[33px] w-[122px]">File</Btn>
          <Btn className="h-[33px] w-[122px]">Edit</Btn>
          <Btn className="h-[33px] w-[122px]">Preferences</Btn>
        </div>
        <div className="flex items-end gap-2">
          <div className="flex w-[86px] flex-col items-center">
            <svg viewBox="0 0 24 24" className="size-6"><circle cx="12" cy="12" r="11.3" fill="#2b353c" stroke="#1f7f97" /><path d="M3 16v-1.500h2V13h2v-2h2V9h2V5h2v4h2v2h2v2h2v1.500h2V16z" fill="#fff" /></svg>
            <span className="font-['Open_Sans',sans-serif] text-[15px] leading-4">Soun<span className="text-[#1c9ad0]">dB</span>ridge</span>
          </div>
          <Cut cut="tlbr" className="h-[33px] w-72" inner="bg-linear-to-b from-[#3a444c] to-[#414c55]" />
        </div>
      </div>

      <div className="flex w-[238px] flex-col justify-between">
        <Cut cut="tlbr" className="h-[33px]" inner={clsx("justify-center", display)}>
          <span className={digits}>00:00:00:000</span>
        </Cut>
        <div className="flex gap-2.5">
          <Cut cut="tlbr" className="h-[33px] flex-1" inner={clsx("gap-1 text-sm", display)}>
            <i className="h-full w-[3px] bg-[#2b6fc0]" />CPU 3%
          </Cut>
          <Cut cut="tlbr" className="h-[33px] flex-1" inner={display} />
        </div>
      </div>

      <div className="flex w-[146px] flex-col justify-between">
        <div className="flex justify-between">
          <Btn className="h-[33px] w-[42px]" label="Record"><i className="size-3.5 rounded-full bg-white" /></Btn>
          <Btn className="h-[33px] w-[42px]" label="Play"><svg viewBox="0 0 12 16" className="h-4 w-3" fill="#fff"><path d="M1 0l10 8-10 8z" /></svg></Btn>
          <Btn className="h-[33px] w-[42px]" label="Stop"><i className="size-3 bg-white" /></Btn>
        </div>
        <span className="w-[42px] self-end text-center leading-4 font-normal text-[#97a1a8]">Swing</span>
        <div className="flex justify-between">
          <Btn className="h-[33px] w-[42px]">Shift</Btn>
          <Btn className="h-[33px] w-[42px]">Delete</Btn>
          <Btn className="h-[33px] w-[42px]" label="Swing">
            <svg viewBox="0 0 18 18" className="size-[18px]" fill="#fff"><path d="M6 14V3l10-2v11" fill="none" stroke="#fff" strokeWidth="1.8" /><ellipse cx="4" cy="14.5" rx="3" ry="2.3" /><ellipse cx="14" cy="12.5" rx="3" ry="2.3" /></svg>
          </Btn>
        </div>
      </div>

      <div className="flex w-[138px] flex-col justify-between">
        <Cut cut="tlbr" className="h-[33px]" inner={clsx("justify-center", display)}>
          <span className={digits}>120.000</span>
        </Cut>
        <div className="flex justify-between text-center leading-4 font-normal text-[#97a1a8]">
          <span className="w-[65px]">Count-In</span><span className="w-[65px]">Time Sig.</span>
        </div>
        <div className="flex justify-between">
          <Btn className="h-[33px] w-[65px]">1 Bar</Btn>
          <Btn className="h-[33px] w-[65px]">4/4</Btn>
        </div>
      </div>

      <div className="grid grid-cols-2 content-between gap-x-2.5">
        <Toggle label="Snap" on />
        <Cut cut="tlbr" className="relative h-[23px] w-[106px]" inner="items-center bg-linear-to-b from-[#2b333b] to-[#222a30]">
          <select aria-label="Snap to" className="h-full w-full appearance-none bg-transparent pl-3 outline-none"><option>Bar</option></select>
          <ChevronUp className="pointer-events-none absolute right-2 size-3.5" strokeWidth={2} />
        </Cut>
        <Toggle label="Loop" on />
        <Toggle label="Follow" on />
        <Toggle label="Metro" />
        <Toggle label="Count" />
      </div>

      <div className="grid grid-cols-6 content-between gap-x-2">
        <Btn tone="blue" className="size-[34px]" label="Select">
          <svg viewBox="0 0 20 20" className={gi}><path d="M3 3l8 2-2 2 8 8-2.500 2.500-8-8-1.500 2z" fill="#0f2733" /></svg>
        </Btn>
        <Btn className="size-[34px]" label="Draw">
          <svg viewBox="0 0 20 20" className={gi} fill="#fff"><path d="M15 2l3 3L7.500 15.500 3 17l1.500-4.500z" /></svg>
        </Btn>
        <Btn className="size-[34px]" label="Cut">
          <svg viewBox="0 0 20 20" className={gi} fill="none" stroke="#fff" strokeWidth="1.5"><path d="M9 2l1 13M3 6l12 7" strokeWidth="2" /><circle cx="9.5" cy="17" r="2" /><circle cx="16.5" cy="13.500" r="2" /></svg>
        </Btn>
        <Btn className="size-[34px]" label="Mute">
          <svg viewBox="0 0 20 20" className={gi} fill="#fff"><path d="M2 7.500h4L11 3v14l-5-4.500H2z" /><path d="M13 7l4 6m0-6l-4 6" stroke="#fff" strokeWidth="1.2" /></svg>
        </Btn>
        <Btn className="size-[34px] text-xl">?</Btn>
        <Btn className="size-[34px]" label="Undo"><RotateCcw className="size-[18px]" /></Btn>
        <Btn tone="green" className="size-[34px]" label="Track list">
          <svg viewBox="0 0 20 20" className={gi} fill="none" stroke="#0f3d29" strokeWidth="1.3"><path d="M2 1h3v3H2zM5 6h3v3H5zM5 11h3v3H5zM2 16h3v3H2zM7 2.500h10M10 7.500h8M10 12.500h8M7 17.500h10M3.500 4v12" /></svg>
        </Btn>
        <Btn tone="green" className="size-[34px]" label="Arrangement">
          <svg viewBox="0 0 22 20" className={gi} fill="none" stroke="#0f3d29" strokeWidth="1.3"><path d="M1 5h20v13H1zM1 9.300h20M1 13.600h20M11 3v15" /><path d="M8 1h6l-3 3z" fill="#0f3d29" /></svg>
        </Btn>
        <Btn tone="green" className="size-[34px]" label="Automation">
          <svg viewBox="0 0 20 20" className={gi} fill="none" stroke="#0f3d29" strokeWidth="1.3"><path d="M1 1h18v18H1zM7 1v18M13 1v18" /><path d="M1 13l3 3 5-11 5 9 5-3" strokeWidth="1.8" /></svg>
        </Btn>
        <Btn className="size-[34px]" label="Mixer">
          <svg viewBox="0 0 20 20" className={gi} fill="none" stroke="#fff" strokeWidth="1.2"><path d="M.6.6h18.800v18.800H.6zM7 1v18M13 1v18M.6 14h18.800M3.500 3v8M10 3v8M16.500 3v8" /><path d="M3 8h2M9.500 6h2M16 9h2M3 16.700h1.500M9.300 16.700h1.500M15.500 16.700H17" strokeWidth="2.5" /></svg>
        </Btn>
        <Btn tone="green" className="size-[34px]" label="Devices">
          <svg viewBox="0 0 12 22" className="h-[22px] w-3" fill="none" stroke="#0f3d29" strokeWidth="1.3"><path d="M1.500 1h9v9h-9zM1.500 12h9v9h-9z" /><path d="M4 4h4v3H5M4 18v-3h4v3H6" /></svg>
        </Btn>
        <Btn tone="dim" className="size-[34px]" label="Redo"><RotateCw className="size-[18px]" /></Btn>
      </div>

      <div className="grid grid-cols-2 content-between gap-x-2.5">
        {["Split", "Merge", "Freeze", "Adjust", "Quantize", "Duplicate"].map((name) => (
          <Btn key={name} className="h-[23px] w-[78px]">{name}</Btn>
        ))}
      </div>
    </Cut>
  );
}

/* ---------- dock ---------- */

const sans = "Liberation Sans, sans-serif";

const dockIcons: ReactNode[] = [
  <>{/* Finder */}
    <path d="M6 7h52v50H6z" fill="#e8f1fa" /><path d="M6 7h29q-7 13-6 29h7q-1 11 2 21H6z" fill="#1da5ee" /><path d="M35 7q-7 13-6 29h7q-1 11 2 21" fill="none" stroke="#1c3a52" />
    <path d="M20 20v6M44 20v6" stroke="#16283a" strokeWidth="2" /><path d="M16 39q16 13 32 0" fill="none" stroke="#16283a" strokeWidth="2" />
  </>,
  <>{/* Mail */}
    <g transform="rotate(-9 32 32)"><path d="M11 6h42v52H11z" fill="#fff" stroke="#fff" strokeWidth="3" strokeDasharray="3 2" /><path d="M14 9h36v46H14z" fill="#3f8ed8" /><path d="M14 40q20-8 36 0v15H14z" fill="#9cc8ee" /><path d="M20 14q8 2 9 15 9 0 15 9l-7 2-8 7-6-3 2-8q-5-8-5-22z" fill="#5a4330" /><path d="M21 15q7 4 7 14" stroke="#b9b4ab" strokeWidth="3" fill="none" /><path d="M24 40l6-2 3 4-6 4z" fill="#e8a23c" /></g>
    <circle cx="47" cy="52" r="8" fill="none" stroke="#7a86b8" />
  </>,
  <>{/* Outlook */}
    <path d="M34 19h28v27H34z" fill="#fff" /><path d="M38 21l9 10 14-11" fill="none" stroke="#333" strokeWidth="2" /><path d="M4 8l32-5v58L4 55z" fill="#0f7fd2" /><ellipse cx="19" cy="32" rx="6.5" ry="9" fill="none" stroke="#fff" strokeWidth="4" />
  </>,
  <>{/* System Preferences */}
    <rect x="4" y="7" width="55" height="50" rx="2" fill="#a9abad" /><circle cx="32" cy="32" r="23" fill="#3a3b3d" /><circle cx="32" cy="32" r="20" fill="none" stroke="#b5b6b8" strokeWidth="4" strokeDasharray="2 2" /><circle cx="32" cy="32" r="15" fill="none" stroke="#a4a6a8" strokeWidth="4" /><path d="M32 32L21 20M32 32h16M32 32L21 45" stroke="#a4a6a8" strokeWidth="3" /><circle cx="32" cy="32" r="4" fill="#c5c7c9" />
  </>,
  <>{/* App Store */}
    <circle cx="32" cy="32" r="28" fill="#1a86ee" stroke="#e6eefa" strokeWidth="2" /><path d="M33 14L21 44M31 14l14 30M13 37h26M44 37h7" stroke="#fff" strokeWidth="4" strokeLinecap="round" />
  </>,
  <>{/* Safari */}
    <circle cx="32" cy="32" r="28" fill="#e9edf2" /><circle cx="32" cy="32" r="25" fill="#1f8fe8" /><circle cx="32" cy="32" r="22" fill="none" stroke="#cfe6fa" strokeWidth="3" strokeDasharray="1 3" /><path d="M46 14L28 29l7 6z" fill="#e8383b" /><path d="M18 50l10-21 7 6z" fill="#f4f4f4" />
  </>,
  <>{/* iTunes */}
    <circle cx="32" cy="32" r="28" fill="#d85cc0" /><circle cx="32" cy="32" r="25" fill="#fbf8fc" /><path d="M25 43V19l18-4v23" fill="none" stroke="#e44d7e" strokeWidth="4" /><ellipse cx="21.5" cy="44" rx="5.5" ry="4.5" fill="#4a7ee8" /><ellipse cx="39.5" cy="39" rx="5.5" ry="4.5" fill="#9a60d8" />
  </>,
  <>{/* Calendar */}
    <g transform="rotate(-5 32 32)"><path d="M9 9h42v48H9z" fill="#f6f6f6" /><path d="M9 9h42v12H9z" fill="#dd3b35" /><path d="M9 57h42l3 3H12z" fill="#3c3a40" /><text x="30" y="18" fontSize="9" fill="#fff" textAnchor="middle" fontFamily={sans}>MAY</text><text x="30" y="47" fontSize="27" fill="#222" textAnchor="middle" fontFamily={sans}>24</text></g>
  </>,
  <>{/* Notes */}
    <g transform="rotate(-4 32 32)"><path d="M12 6h42v52H12z" fill="#fbfaf6" /><path d="M12 6h42v9H12z" fill="#f7c52e" /><path d="M12 21h42M12 27h42M12 33h42M12 39h42M12 45h42M12 51h42" stroke="#cfd0d6" /></g>
  </>,
  <>{/* Photos */}
    <circle cx="32" cy="32" r="28" fill="#fafafa" />
    {["#f49a2e", "#c9cf3a", "#66b85a", "#4aa893", "#62a4dd", "#8b74c0", "#c45f8f", "#e85a44"].map((c, i) => (
      <ellipse key={c} cx="32" cy="19" rx="7" ry="11" fill={c} opacity=".85" transform={`rotate(${i * 45} 32 32)`} />
    ))}
  </>,
  <>{/* Logic */}
    <g transform="rotate(-8 32 32)"><rect x="7" y="6" width="50" height="52" rx="3" fill="#15171a" stroke="#e8e8ec" strokeWidth="2" /><circle cx="33" cy="28" r="19" fill="#a9afb8" /><path d="M33 28L20 14M33 28l15-12M33 28l10 16" stroke="#fff" strokeWidth="3" opacity=".7" /><circle cx="33" cy="28" r="5" fill="#eef0f4" /><path d="M18 50h28" stroke="#eee" strokeWidth="4" /></g>
  </>,
  <>{/* GarageBand */}
    <path d="M18 18h40v36H18z" fill="#7c4a2a" stroke="#c99c62" strokeWidth="2" /><path d="M18 18h40v7H18z" fill="#1d1a1a" /><path d="M36 3L24 40" stroke="#6b3a1e" strokeWidth="4" /><path d="M35 1h6l-1 9h-6z" fill="#2a2222" /><path d="M13 35q5-3 9 1t8 0q5 4-2 10 1 12-10 13T9 50q5-7 4-15z" fill="#e88a2c" stroke="#7a2f14" strokeWidth="2" /><path d="M23 34l-5 20" stroke="#2a1c14" strokeWidth="3" />
  </>,
  <>{/* Final Cut */}
    <defs><linearGradient id="fcp"><stop stopColor="#f0c43a" /><stop offset=".35" stopColor="#e8662e" /><stop offset=".7" stopColor="#c44cc8" /><stop offset="1" stopColor="#3b7ee8" /></linearGradient></defs>
    <g transform="rotate(-8 32 32)"><path d="M8 27h50v30H8z" fill="url(#fcp)" stroke="#f2f2f2" strokeWidth="2" /><circle cx="32" cy="46" r="9" fill="#fff" opacity=".6" /><path d="M7 18h50v8H7z" fill="#17181a" /><path d="M12 26l5-8M24 26l5-8M36 26l5-8M48 26l5-8" stroke="#fff" strokeWidth="5" /></g><path d="M4 17L52 4l2 7L6 24z" fill="#17181a" /><path d="M12 22l-2-6M24 18l-3-6M37 15l-3-6M49 12l-3-6" stroke="#fff" strokeWidth="5" />
  </>,
  <>{/* Time Machine */}
    <circle cx="32" cy="32" r="28" fill="#b9bcc6" /><circle cx="32" cy="32" r="25" fill="#f7f7f7" /><circle cx="32" cy="32" r="22" fill="none" stroke="#222" strokeWidth="3" strokeDasharray="1 10.5" /><path d="M19 30a13 13 0 0 1 24-5M45 36a13 13 0 0 1-23 6" fill="none" stroke="#9fa0a6" strokeWidth="2" /><path d="M32 32V9M32 32l13 8" stroke="#111" strokeWidth="2" /><path d="M32 32L9 38" stroke="#c0392b" />
  </>,
  <>{/* Joystick */}
    <path d="M4 26l44-6 12 30-44 12z" fill="#d2232a" /><path d="M6 26l40-5 9 24-38 8z" fill="#1a1c2c" /><path d="M14 25l10 27M24 24l10 26M34 23l10 25M9 35l42-6M13 44l41-7" stroke="#3a3f66" /><circle cx="23" cy="45" r="6" fill="#2a63c8" /><path d="M33 16v18" stroke="#cfd2d8" strokeWidth="4" /><circle cx="35" cy="12" r="10" fill="#d8131c" />
  </>,
  <>{/* Dolphin */}
    <path d="M2 36q3-18 25-20 8 0 14 2l7-3-3 5q15 8 17 32-6-16-18-21-7-3-14-1l3 9-8-7Q11 25 5 35z" fill="#3ea4ea" stroke="#1c6cb8" /><path d="M12 29q14 0 20 13" stroke="#3ea4ea" strokeWidth="3" fill="none" />
  </>,
  <><path d="M5 5h54v54H5z" fill="#2fb4f0" /><path d="M8 8h48v48H8z" fill="#0b1c28" /><text x="32" y="41" fontSize="27" fontWeight="600" fill="#35bdf5" textAnchor="middle" fontFamily="Open Sans, sans-serif">Ps</text></>,
  <><path d="M5 5h54v54H5z" fill="#b9d0f2" /><path d="M8 8h48v48H8z" fill="#102430" /><text x="32" y="42" fontSize="29" fontWeight="600" fill="#bcd6f0" textAnchor="middle" fontFamily="Open Sans, sans-serif">Lr</text></>,
  <>{/* Pages */}
    <g transform="rotate(-6 30 32)"><path d="M9 7h40v50H9z" fill="#fcfcfc" /><path d="M9 7h40v9H9z" fill="#f19332" /><text x="11" y="14.5" fontSize="7.5" fontWeight="bold" fill="#fff" fontFamily={sans}>PAGES</text><path d="M13 20h17v13H13z" fill="#3d8fdc" /><circle cx="21" cy="26" r="4" fill="#e8832a" /><path d="M33 22h13M33 26h13M33 30h13M13 37h33M13 41h33M13 45h33M13 49h33" stroke="#b5b5ba" /></g><path d="M50 4l5 2-13 44-5 8 0-10z" fill="#e79b3c" stroke="#9a5f1c" />
  </>,
  <>{/* Nikon */}
    <path d="M1 0h62v64H1z" fill="#060606" /><path d="M12 8l22 24L8 46z" fill="#f5c52a" /><path d="M14 7h20L16 30z" fill="#e05bb0" /><path d="M34 7h14L30 30z" fill="#f0852e" /><path d="M48 7l9 39-27-20z" fill="#3fb04a" /><path d="M30 26l26 20q-12-5-24-4z" fill="#28bcd8" /><path d="M16 28l14-2-6 15-16 5z" fill="#e05bb0" /><path d="M8 46q24-9 48 0L32 36z" fill="#7d3fc0" /><text x="32" y="60" fontSize="14" fontWeight="bold" fontStyle="italic" fill="#fff" textAnchor="middle" fontFamily={sans}>Nikon</text>
  </>,
  <>{/* iMovie */}
    <path d="M30 4l9 18 21-2-15 16 9 18-21-8-14 15 1-21L2 28l20-4z" fill="#6a3fd0" stroke="#f4f2fa" strokeWidth="3" strokeLinejoin="round" /><path d="M24 29h14v10H24zM39 34l6-4v8z" fill="#efeafc" />
  </>,
  <>{/* PS4 Remote */}
    <rect x="3" y="2" width="58" height="59" rx="4" fill="#0a4aa8" /><circle cx="32" cy="11" r="2.5" fill="#d5e6fa" /><circle cx="32" cy="19" r="2.5" fill="#d5e6fa" /><path d="M20 25q2-3 5 0h14q3-3 5 0 5 9 5 17-3 5-7 0l-3-5H25l-3 5q-4 5-7 0 0-8 5-17z" fill="none" stroke="#d5e6fa" strokeWidth="2.5" /><text x="32" y="57" fontSize="10" fill="#d5e6fa" textAnchor="middle" fontFamily={sans}>PS4</text>
  </>,
  <>{/* MainStage */}
    <g transform="rotate(-5 32 34)"><rect x="12" y="8" width="38" height="51" rx="2" fill="#e8742a" stroke="#f3f0ea" strokeWidth="2.5" /><path d="M14 10h34v20H14z" fill="#f4b53c" /></g><path d="M33 18a3.500 3.500 0 0 1 0 7l8 3 1 14 4 15h-4l-6-13-7 13h-4l5-16-1-8-16-4 16 0q0-4 4-5z" fill="#131013" /><path d="M23 1h6v9h-5z" fill="#ddd" /><path d="M12 8q3-7 10-6" stroke="#333" strokeWidth="2" fill="none" />
  </>,
  <>{/* Keyboard */}
    <path d="M5 7h52v51H5z" fill="#2c2d31" /><path d="M24 11h15v9H24z" fill="#0c0c0e" /><path d="M8 12h13M8 16h10M42 11v8M47 11v8M52 11v8" stroke="#7a7b80" /><path d="M10 29h43v28H10z" fill="#fbfbfb" /><path d="M16 29v28M22 29v28M28 29v28M34 29v28M41 29v28M47 29v28" stroke="#555" /><path d="M16 29v16M22 29v16M34 29v16M41 29v16M47 29v16" stroke="#111" strokeWidth="3" />
  </>,
  <>{/* Package */}
    <path d="M32 4l28 12-3 32-25 12L5 48 4 15z" fill="#94846c" /><path d="M32 4l28 12-28 11L4 15z" fill="#ad9c82" /><path d="M32 27v33l25-12 3-32z" fill="#82735c" /><path d="M14 26l4 8 9 2-7 5 2 10-7-7-6 4 2-9-6-6h7z" fill="#fff" />
  </>,
  <>{/* Audio gear */}
    <path d="M0 1h64v63H0z" fill="#3d3e41" /><path d="M0 44h64v20H0z" fill="#121214" /><circle cx="31" cy="27" r="19" fill="#e6e8ea" /><circle cx="31" cy="27" r="21" fill="none" stroke="#cfd2d5" strokeWidth="5" strokeDasharray="8 8.5" /><path d="M20 24q8-8 20-7-8 7-20 7zM20 31q10-4 24-5-8 9-24 5zM26 38q8-2 14-6-3 9-14 6z" fill="#1b93ad" /><path d="M4 43l22 15" stroke="#f2f2f2" strokeWidth="4" /><path d="M40 54l18-14" stroke="#555" strokeWidth="7" /><circle cx="39" cy="55" r="5" fill="#888" stroke="#ddd" />
  </>,
  <>{/* Camera */}
    <circle cx="32" cy="32" r="28" fill="#1426d6" /><g fill="none" stroke="#fff" strokeWidth="4" transform="rotate(-14 32 34)"><path d="M16 28h30v22H16z" fill="#2f6bf0" /><circle cx="22" cy="18" r="5" /><circle cx="36" cy="17" r="5" /><path d="M51 27v14" /></g>
  </>,
  <>{/* Notation */}
    <rect x="2" y="1" width="60" height="62" rx="2" fill="#1d0f26" /><path d="M2 1h60v16H2z" fill="#35283d" /><circle cx="32" cy="32" r="25" fill="#32124a" stroke="#d9d4de" strokeWidth="3" /><path d="M31 55q-7 1-5-5M32 54L28 16q1-10 6-12 4 10-5 20-8 8-5 14 4 6 11 3 5-4 1-9-4-3-7 1" fill="none" stroke="#dcd8e0" strokeWidth="3" />
  </>,
  <>{/* Folder */}
    <path d="M22 5l12 3 3-3 25 11-10 47L24 40z" fill="#8a3fe0" /><path d="M22 5l12 3 22 9-8 20z" fill="#3d55e0" /><path d="M0 6l15 5 4-2 6 8 20 8 6 37L14 42z" fill="#dfe6f8" /><path d="M14 28l12 4 12 20" stroke="#aab6d8" strokeWidth="4" fill="none" />
  </>,
  <>{/* SoundBridge */}
    <circle cx="32" cy="32" r="31" fill="#26333d" /><circle cx="32" cy="32" r="28" fill="none" stroke="#1c8fae" strokeWidth="2" /><path d="M11 40v-5h4v5zM17 40v-8h4v8zM23 40V25h4v15zM29.500 40V17h5v23zM36 40V25h4v15zM42 40v-8h4v8zM48 40v-5h5v5z" fill="#fff" />
  </>,
  <>{/* 1Password */}
    <path d="M9 10q0-3 10-3l4 3h32v40H9z" fill="#6cb8ea" /><path d="M38 9h16v6H38z" fill="#c8232e" /><circle cx="32" cy="35" r="26" fill="#f2f4f6" /><circle cx="32" cy="35" r="22" fill="#1a7ad8" /><circle cx="32" cy="35" r="16" fill="#f4f4f4" /><path d="M28 23h8v9l-2 2 2 3v10h-8V37l2-2-2-3z" fill="#46484c" />
  </>,
  <>{/* Stack */}
    <path d="M18 1h16l12 10v6H18z" fill="#f2f2f4" /><path d="M6 11h54v45H6z" fill="#0d0c0e" /><path d="M6 26h54v14H6z" fill="#c9c6c8" /><path d="M6 14h54v9q-26 9-54 3z" fill="#242226" /><path d="M10 27l6 13M24 28v10M40 28v10M54 27l-4 13" stroke="#3d3230" strokeWidth="2" /><path d="M6 38h54v12H6z" fill="#77675a" /><path d="M12 40q20 5 40 0" stroke="#9a4a2c" strokeWidth="3" fill="none" />
  </>,
  <>{/* Trash */}
    <path d="M9 7h46l-5 50q-18 5-36 0z" fill="#e4e3ee" opacity=".92" /><ellipse cx="32" cy="7.5" rx="23" ry="3.5" fill="#f6f6fb" stroke="#c9c8d8" /><path d="M18 14l3 42M45 14l-3 42" stroke="#fff" strokeWidth="4" opacity=".6" />
  </>,
];

function Dock() {
  return (
    <div className="flex h-20 shrink-0 justify-center">
      <div className="flex rounded-t-md bg-linear-to-b from-[#756eb5] via-[#7c76cb] to-[#7f78d4] px-1">
        {dockIcons.map((icon, i) => (
          <div key={i} className="flex">
            {i === 30 && <i className="mx-3.5 mt-2.5 h-[60px] w-px bg-[#57519c]" />}
            <button className="relative flex w-[68px] justify-center pt-1.5">
              <svg viewBox="0 0 64 64" className="size-16">{icon}</svg>
              {(i === 0 || i === 29) && <i className="absolute bottom-0.5 size-1 rounded-full bg-[#15123c]" />}
            </button>
          </div>
        ))}
      </div>
    </div>
  );
}

export default function App() {
  return (
    <div className="flex h-screen flex-col overflow-hidden bg-[#4a4592] font-['Roboto_Condensed',Roboto,sans-serif] text-xs font-semibold text-white">
      <MenuBar />
      <TitleBar />
      <main className="flex min-h-0 flex-1 flex-col rounded-b-lg bg-[#252d33] shadow-[0_4px_24px_#1c1a4a]">
        <div className="flex min-h-0 flex-1">
          <Browser />
          <div className="relative flex min-w-0 flex-1 flex-col">
            <Handle className="top-[516px] -left-2.5" />
            <Handle className="top-[217px] left-[235px]" />
            <Handle vertical className="top-[499px] left-1/2 -translate-x-1/2" />
            <section className="flex h-[509px] shrink-0 border-b border-[#56626a]">
              <TrackList />
              <Arrangement />
            </section>
            <section className="flex min-h-0 flex-1">
              <NoteTools />
              <PianoRoll />
            </section>
          </div>
          <Channel />
        </div>
        <Transport />
      </main>
      <Dock />
    </div>
  );
}
